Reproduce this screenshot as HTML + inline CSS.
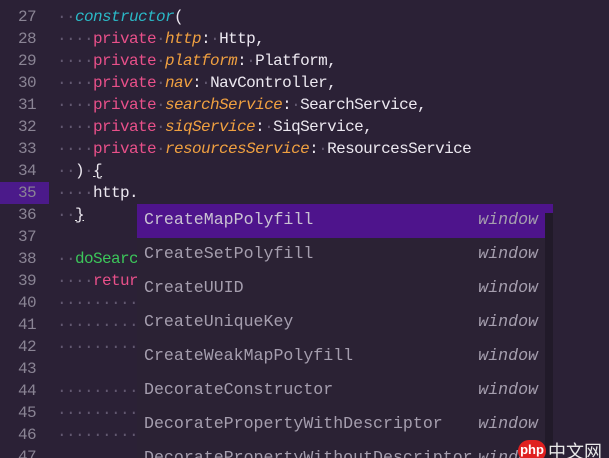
<!DOCTYPE html><html style="overflow:hidden;height:458px"><head><style>
body{margin:0;width:609px;height:458px;background:#2b2136;overflow:hidden;position:relative;font-family:"Liberation Mono",monospace;}
.ln{position:absolute;left:0;width:36px;text-align:right;color:#8a8494;font-size:16px;line-height:22px;height:22px;letter-spacing:-0.6px}
.c{position:absolute;left:57px;font-size:16px;letter-spacing:-0.6px;line-height:22px;white-space:pre;color:#ece8f0}
.d{color:#625870}.k{color:#e9508a}.p{color:#f0a040;font-style:italic}.f{color:#2bb8c6;font-style:italic}.g{color:#3cc65a}
#hl{position:absolute;left:0;top:182px;width:49px;height:22px;background:#4b1a8a}
#pop{position:absolute;left:137px;top:204px;width:416px;height:254px;background:#2b2234;font-size:16.6px;overflow:hidden}
.r{height:34px;line-height:32px;padding-left:7px;color:#a59eae;position:relative;width:401px}
.r i{position:absolute;right:7px;top:0;color:#a59eae}
.r.s{background:#4e148c;color:#c9c2d2}
#sb{position:absolute;right:0;top:0;width:8px;height:100%;background:#211a29}
#th{position:absolute;right:0;top:0;width:8px;height:9px;background:#4e148c}
u{text-decoration-color:#e8e8e8}
</style></head><body>
<div id="hl"></div>
<div class="ln" style="top:6px">27</div><div class="ln" style="top:28px">28</div><div class="ln" style="top:50px">29</div><div class="ln" style="top:72px">30</div><div class="ln" style="top:94px">31</div><div class="ln" style="top:116px">32</div><div class="ln" style="top:138px">33</div><div class="ln" style="top:160px">34</div><div class="ln" style="top:182px">35</div><div class="ln" style="top:204px">36</div><div class="ln" style="top:226px">37</div><div class="ln" style="top:248px">38</div><div class="ln" style="top:270px">39</div><div class="ln" style="top:292px">40</div><div class="ln" style="top:314px">41</div><div class="ln" style="top:336px">42</div><div class="ln" style="top:358px">43</div><div class="ln" style="top:380px">44</div><div class="ln" style="top:402px">45</div><div class="ln" style="top:424px">46</div><div class="ln" style="top:446px">47</div>
<div class="c" style="top:6px"><span class="d">··</span><span class="f">constructor</span>(</div>
<div class="c" style="top:28px"><span class="d">····</span><span class="k">private</span><span class="d">·</span><span class="p">http</span>:<span class="d">·</span>Http,</div>
<div class="c" style="top:50px"><span class="d">····</span><span class="k">private</span><span class="d">·</span><span class="p">platform</span>:<span class="d">·</span>Platform,</div>
<div class="c" style="top:72px"><span class="d">····</span><span class="k">private</span><span class="d">·</span><span class="p">nav</span>:<span class="d">·</span>NavController,</div>
<div class="c" style="top:94px"><span class="d">····</span><span class="k">private</span><span class="d">·</span><span class="p">searchService</span>:<span class="d">·</span>SearchService,</div>
<div class="c" style="top:116px"><span class="d">····</span><span class="k">private</span><span class="d">·</span><span class="p">siqService</span>:<span class="d">·</span>SiqService,</div>
<div class="c" style="top:138px"><span class="d">····</span><span class="k">private</span><span class="d">·</span><span class="p">resourcesService</span>:<span class="d">·</span>ResourcesService</div>
<div class="c" style="top:160px"><span class="d">··</span>)<span class="d">·</span><u>{</u></div>
<div class="c" style="top:182px"><span class="d">····</span>http.</div>
<div class="c" style="top:204px"><span class="d">··</span><u>}</u></div>
<div class="c" style="top:248px"><span class="d">··</span><span class="g">doSearch</span></div>
<div class="c" style="top:270px"><span class="d">····</span><span class="k">return</span></div>
<div class="c" style="top:292px"><span class="d">··········</span></div>
<div class="c" style="top:314px"><span class="d">··········</span></div>
<div class="c" style="top:336px"><span class="d">··········</span></div>
<div class="c" style="top:380px"><span class="d">··········</span></div>
<div class="c" style="top:402px"><span class="d">··········</span></div>
<div class="c" style="top:424px"><span class="d">··········</span></div>
<div class="c" style="top:314px;left:476px;color:#5a7fd0">h<span class="d">·</span>/med</div>
<div class="c" style="top:402px;left:476px"><span style="color:#9a6af0">0</span>];</div>
<div id="pop">
<div class="r s">CreateMapPolyfill<i>window</i></div>
<div class="r">CreateSetPolyfill<i>window</i></div>
<div class="r">CreateUUID<i>window</i></div>
<div class="r">CreateUniqueKey<i>window</i></div>
<div class="r">CreateWeakMapPolyfill<i>window</i></div>
<div class="r">DecorateConstructor<i>window</i></div>
<div class="r">DecoratePropertyWithDescriptor<i>window</i></div>
<div class="r">DecoratePropertyWithoutDescriptor<i>window</i></div>
<div id="sb"><div id="th"></div></div>
</div>
<div style="position:absolute;left:518px;top:440px;width:28px;height:22px;border-radius:11px;background:#e02020;color:#fff;font:bold 13px 'Liberation Sans',sans-serif;text-align:center;line-height:20px">php</div>
<div style="position:absolute;left:548px;top:438px;color:#e8e8e8;font:18px 'Liberation Sans','Noto Sans CJK SC',sans-serif">中文网</div>
</body></html>
